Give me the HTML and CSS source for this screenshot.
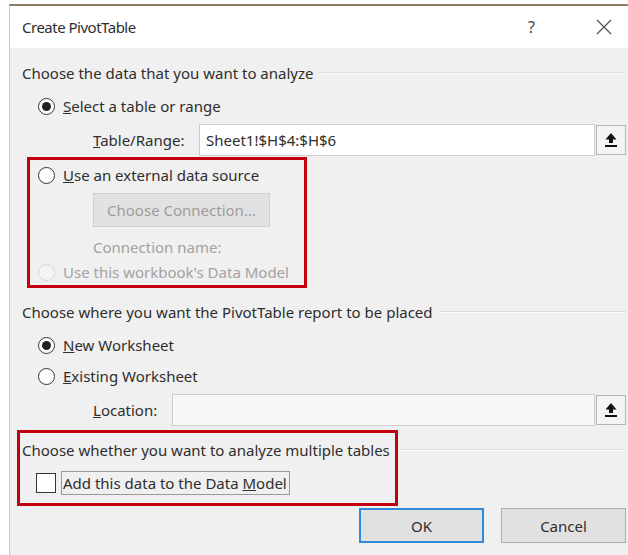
FILE: index.html
```html
<!DOCTYPE html>
<html lang="en">
<head>
<meta charset="utf-8">
<title>Create PivotTable</title>
<link rel="stylesheet" href="styles.css">
</head>
<body>
<div class="screen">
  <div class="dialog">
    <div class="titlebar">
      <span class="title">Create PivotTable</span>
      <span class="help">?</span>
      <svg class="close" width="16" height="16" viewBox="0 0 16 16"><path d="M1 1L15 15M15 1L1 15" stroke="#555" stroke-width="1.3" fill="none"/></svg>
    </div>
    <div class="body">
      <div class="heading h1"><span>Choose the data that you want to analyze</span><i class="rule"></i></div>

      <label class="opt r1"><span class="radio on"></span><span><u>S</u>elect a table or range</span></label>
      <div class="field f1">
        <span class="flabel"><u>T</u>able/Range:</span>
        <div class="input">Sheet1!$H$4:$H$6</div>
        <div class="pick"><svg width="14" height="16" viewBox="0 0 14 16"><path d="M7 1L1.5 7.5H5V11H9V7.5H12.5Z" fill="#111"/><rect x="1" y="13" width="12" height="2" fill="#111"/></svg></div>
      </div>

      <label class="opt r2"><span class="radio"></span><span><u>U</u>se an external data source</span></label>
      <div class="connbtn">Choose Connection...</div>
      <div class="connname">Connection name:</div>
      <label class="opt r3 off"><span class="radio dis"></span><span>Use this workbook's Data Model</span></label>

      <div class="heading h2"><span>Choose where you want the PivotTable report to be placed</span><i class="rule"></i></div>
      <label class="opt r4"><span class="radio on"></span><span><u>N</u>ew Worksheet</span></label>
      <label class="opt r5"><span class="radio"></span><span><u>E</u>xisting Worksheet</span></label>
      <div class="field f2">
        <span class="flabel"><u>L</u>ocation:</span>
        <div class="input empty"></div>
        <div class="pick"><svg width="14" height="16" viewBox="0 0 14 16"><path d="M7 1L1.5 7.5H5V11H9V7.5H12.5Z" fill="#111"/><rect x="1" y="13" width="12" height="2" fill="#111"/></svg></div>
      </div>

      <div class="heading h3"><span>Choose whether you want to analyze multiple tables</span><i class="rule"></i></div>
      <label class="opt r6"><span class="check"></span><span class="focus">Add this data to the Data <u>M</u>odel</span></label>

      <div class="actions">
        <div class="btn primary">OK</div>
        <div class="btn">Cancel</div>
      </div>
    </div>
  </div>
  <div class="mark m1"></div>
  <div class="mark m2"></div>
</div>
</body>
</html>
```
FILE: styles.css
```css
html, body {
  margin: 0;
  padding: 0;
  background: #fff;
  overflow: hidden;
}

.screen {
  position: relative;
  width: 628px;
  height: 555px;
  padding: 4px 0 0 9px;
  box-sizing: border-box;
  font-family: "Noto Sans", "Open Sans", sans-serif;
  font-size: 15px;
  color: #2e2e2e;
}

.dialog {
  height: 100%;
  border-top: 2px solid #8d7b68;
  border-left: 1px solid #d9c4ae;
  background: #f0f0f0;
  display: flex;
  flex-direction: column;
}

.titlebar {
  height: 42px;
  background: #fff;
  display: flex;
  align-items: center;
  padding-left: 12px;
  flex-shrink: 0;
}
.title {
  font-size: 15px;
  letter-spacing: -0.5px;
  color: #2e2e2e;
  flex: 1;
}
.help {
  font-size: 16px;
  color: #444;
  margin-right: 61px;
}
.close {
  margin-right: 16px;
}

.body {
  display: flex;
  flex-direction: column;
  padding: 0 2px 0 12px;
}

.heading {
  display: flex;
  align-items: center;
  height: 22px;
  white-space: nowrap;
}
.heading .rule {
  flex: 1;
  height: 0;
  border-top: 1px solid #dcdcdc;
  border-bottom: 1px solid #fbfbfb;
  margin-left: 6px;
}
.h1 { margin-top: 14px; }
.h2 { margin-top: 17px; }
.h3 { margin-top: 13px; }

.opt {
  display: flex;
  align-items: center;
  height: 24px;
  padding-left: 16px;
  gap: 8px;
}
.r1 { margin-top: 10px; }
.r2 { margin-top: 7px; }
.r3 { margin-top: 3px; }
.r4 { margin-top: 10px; }
.r5 { margin-top: 7px; }
.r6 { margin-top: 10px; padding-left: 14px; gap: 5px; }

.off { color: #a2a2a2; }

.radio {
  width: 17px;
  height: 17px;
  box-sizing: border-box;
  border: 1px solid #333;
  border-radius: 50%;
  background: #fff;
  display: flex;
  align-items: center;
  justify-content: center;
}
.radio.on::after {
  content: "";
  width: 9px;
  height: 9px;
  border-radius: 50%;
  background: #222;
}
.radio.dis {
  border-color: #d6d6d6;
  background: #f4f4f4;
}

.check {
  width: 20px;
  height: 20px;
  box-sizing: border-box;
  border: 1px solid #333;
  background: #fff;
}
.focus {
  border: 1px solid #999;
  padding: 1px 2px 0 1px;
  line-height: 21px;
}

.field {
  display: flex;
  align-items: center;
  height: 32px;
  margin-top: 6px;
}
.flabel {
  padding-left: 71px;
}
.f1 .flabel { width: 106px; }
.f2 .flabel { width: 79px; }
.input {
  flex: 1;
  height: 32px;
  box-sizing: border-box;
  background: #fff;
  border: 1px solid #cdcdcd;
  padding: 0 6px;
  display: flex;
  align-items: center;
  color: #2e2e2e;
}
.input.empty {
  background: #f7f7f7;
}
.pick {
  width: 30px;
  height: 30px;
  box-sizing: border-box;
  border: 1px solid #b5b5b5;
  background: #f4f4f4;
  margin-left: 1px;
  display: flex;
  align-items: center;
  justify-content: center;
}

.connbtn {
  margin: 6px 0 0 71px;
  width: 177px;
  height: 34px;
  box-sizing: border-box;
  background: #e2e2e2;
  border: 1px solid #d0d0d0;
  color: #9d9d9d;
  display: flex;
  align-items: center;
  justify-content: center;
}
.connname {
  margin: 10px 0 0 71px;
  height: 20px;
  line-height: 20px;
  color: #a2a2a2;
}

.actions {
  margin-top: 13px;
  display: flex;
  justify-content: flex-end;
  gap: 17px;
}
.btn {
  width: 125px;
  height: 35px;
  box-sizing: border-box;
  background: #e1e1e1;
  border: 1px solid #adadad;
  display: flex;
  align-items: center;
  justify-content: center;
  color: #2e2e2e;
}
.btn.primary {
  border: 2px solid #2f8ad8;
}

/* red highlight frames drawn over the dialog */
.mark {
  position: absolute;
  border: 3px solid #c3000b;
  box-sizing: border-box;
}
.m1 { left: 27px; top: 157px; width: 280px; height: 131px; }
.m2 { left: 17px; top: 430px; width: 381px; height: 76px; }
```
